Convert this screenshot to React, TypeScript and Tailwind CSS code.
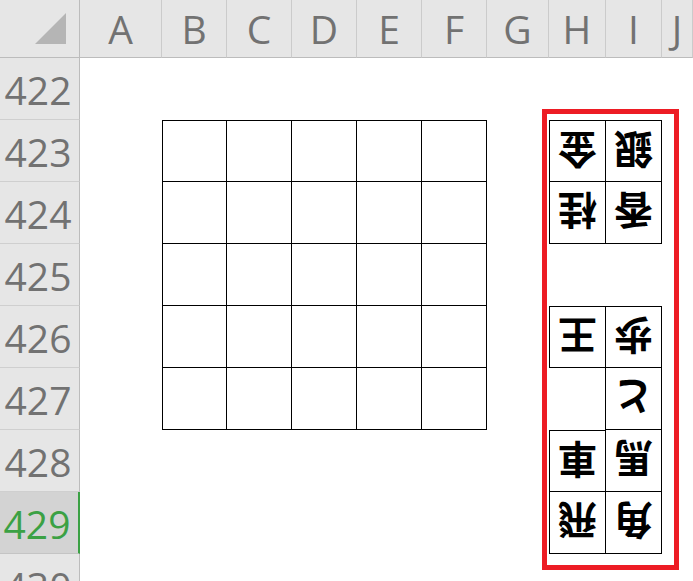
import React from 'react'

const columns = ['A', 'B', 'C', 'D', 'E', 'F', 'G', 'H', 'I', 'J']
const rows = [422, 423, 424, 425, 426, 427, 428, 429, 430]

// pieces on the right (H/I), upside down like the opponent's side
const pieces: Record<string, string> = {
  'H423': '金', 'I423': '銀',
  'H424': '桂', 'I424': '香',
  'H426': '王', 'I426': '歩',
  'I427': 'と',
  'H428': '車', 'I428': '馬',
  'H429': '飛', 'I429': '角',
}

const boxed = new Set<string>([...Object.keys(pieces)])
// empty 5x5 board B423:F427
for (const c of ['B', 'C', 'D', 'E', 'F']) {
  for (const r of [423, 424, 425, 426, 427]) boxed.add(c + r)
}

const prevCol = (c: string) => columns[columns.indexOf(c) - 1]
const nextCol = (c: string) => columns[columns.indexOf(c) + 1]

function Cell({ col, row }: { col: string; row: number }) {
  const key = col + row
  if (!boxed.has(key)) {
    // empty cell sitting between boxed ones keeps the vertical line in place
    const line = boxed.has(nextCol(col) + row) && boxed.has(col + (row - 1))
    return <div className={line ? 'border-r border-black' : ''} />
  }
  const left = !boxed.has(prevCol(col) + row) && !boxed.has(prevCol(col) + (row - 1))
  const top = !boxed.has(col + (row - 1))
  const piece = pieces[key]
  return (
    <div
      className={`flex items-center justify-center border-r border-b border-black ${left ? 'border-l' : ''} ${top ? 'border-t' : ''}`}
    >
      {piece && (
        <span className="inline-block rotate-180 text-[39px] leading-none font-bold text-black [font-family:'Noto_Sans_CJK_JP',sans-serif]">
          {piece}
        </span>
      )}
    </div>
  )
}

export default function App() {
  return (
    <div className="relative w-[693px] h-[581px] overflow-hidden bg-white [font-family:'Open_Sans',sans-serif]">
      <div className="grid grid-cols-[80px_82px_65px_65px_65px_65px_65px_62px_57px_56px_1fr] grid-rows-[58px_repeat(9,62px)]">
        {/* corner */}
        <div className="relative bg-[#e6e6e6] border-r border-b border-[#bcbcbc]">
          <div className="absolute left-[35px] top-[13px] w-[31px] h-[31px] bg-[#b5b5b5] [clip-path:polygon(100%_0,100%_100%,0_100%)]" />
        </div>
        {columns.map((c) => (
          <div
            key={c}
            className="flex items-center justify-center bg-[#e6e6e6] border-r border-b border-r-[#cbcbcb] border-b-[#bcbcbc] text-[39px] text-[#727272] pt-[2px]"
          >
            {c}
          </div>
        ))}

        {rows.map((r) => (
          <React.Fragment key={r}>
            {r === 429 ? (
              <div className="flex items-center justify-center bg-[#d3d3d3] border-r-2 border-b border-r-[#3ba144] border-b-[#c4c4c4] text-[39px] text-[#3ba144] pr-[4px] pt-[3px]">
                {r}
              </div>
            ) : (
              <div className="flex items-center justify-center bg-[#e6e6e6] border-r border-b border-r-[#bcbcbc] border-b-[#cfcfcf] text-[39px] text-[#727272] pr-[3px] pt-[3px]">
                {r}
              </div>
            )}
            {columns.map((c) => (
              <Cell key={c} col={c} row={r} />
            ))}
          </React.Fragment>
        ))}
      </div>

      {/* red highlight frame */}
      <div className="absolute left-[542px] top-[109px] w-[137px] h-[461px] border-[5px] border-[#ed1c24]" />
    </div>
  )
}
